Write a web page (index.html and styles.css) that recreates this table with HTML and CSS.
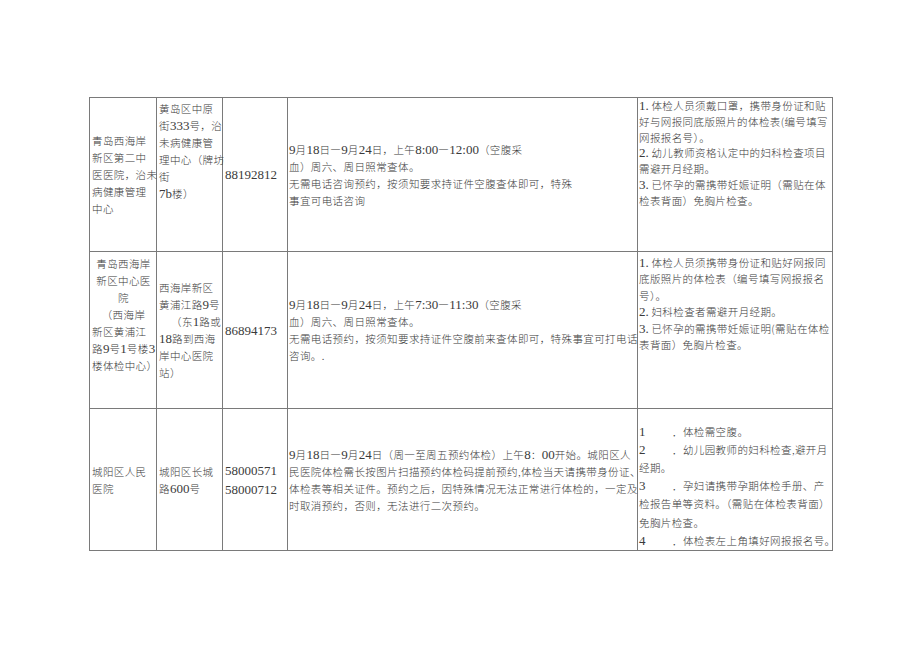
FILE: index.html
```html
<!DOCTYPE html>
<html lang="zh-CN">
<head>
<meta charset="utf-8">
<title>体检安排</title>
<link rel="stylesheet" href="styles.css">
</head>
<body>
<div class="page">
<table class="grid">
  <colgroup>
    <col class="c1"><col class="c2"><col class="c3"><col class="c4"><col class="c5">
  </colgroup>
  <tr class="r1">
    <td class="mid">青岛西海岸<br>新区第二中<br>医医院，治未<br>病健康管理<br>中心</td>
    <td class="top pt2">黄岛区中原<br>街<span class="d">333</span>号，治<br>未病健康管<br>理中心（牌坊<br>街<br><span class="d">7b</span>楼）</td>
    <td class="mid"><span class="d">88192812</span></td>
    <td class="mid wide"><span class="d">9</span>月<span class="d">18</span>日—<span class="d">9</span>月<span class="d">24</span>日，上午<span class="d">8:00</span>—<span class="d">12:00</span>（空腹采<br>血）周六、周日照常查体。<br>无需电话咨询预约，按须知要求持证件空腹查体即可，特殊<br>事宜可电话咨询</td>
    <td class="top notes n1"><span class="d">1.</span> 体检人员须戴口罩，携带身份证和贴<br>好与网报同底版照片的体检表(编号填写<br>网报报名号）。<br><span class="d">2.</span> 幼儿教师资格认定中的妇科检查项目<br>需避开月经期。<br><span class="d">3.</span> 已怀孕的需携带妊娠证明（需贴在体<br>检表背面）免胸片检查。</td>
  </tr>
  <tr class="r2">
    <td class="top pt4"><span class="ctr">青岛西海岸</span><span class="ctr">新区中心医</span><span class="ctr">院</span><span class="ctr">（西海岸</span>新区黄浦江<br>路<span class="d">9</span>号<span class="d">1</span>号楼<span class="d">3</span><br>楼体检中心）</td>
    <td class="mid">西海岸新区<br>黄浦江路<span class="d">9</span>号<br><span class="ind">（东<span class="d">1</span>路或</span><br><span class="d">18</span>路到西海<br>岸中心医院<br>站）</td>
    <td class="mid"><span class="d">86894173</span></td>
    <td class="mid wide"><span class="d">9</span>月<span class="d">18</span>日—<span class="d">9</span>月<span class="d">24</span>日，上午<span class="d">7:30</span>—<span class="d">11:30</span>（空腹采<br>血）周六、周日照常查体。<br>无需电话预约，按须知要求持证件空腹前来查体即可，特殊事宜可打电话<br>咨询。.</td>
    <td class="top notes n2 pt4"><span class="d">1.</span> 体检人员须携带身份证和贴好网报同<br>底版照片的体检表（编号填写网报报名<br>号）。<br><span class="d">2.</span> 妇科检查者需避开月经期。<br><span class="d">3.</span> 已怀孕的需携带妊娠证明(需贴在体检<br>表背面）免胸片检查。</td>
  </tr>
  <tr class="r3">
    <td class="mid">城阳区人民<br>医院</td>
    <td class="mid">城阳区长城<br>路<span class="d">600</span>号</td>
    <td class="mid tel"><span class="d">58000571</span><br><span class="d">58000712</span></td>
    <td class="mid wide"><span class="d">9</span>月<span class="d">18</span>日—<span class="d">9</span>月<span class="d">24</span>日（周一至周五预约体检）上午<span class="d">8</span>：<span class="d">00</span>开始。城阳区人<br>民医院体检需长按图片扫描预约体检码提前预约,体检当天请携带身份证、<br>体检表等相关证件。预约之后，因特殊情况无法正常进行体检的，一定及<br>时取消预约，否则，无法进行二次预约。</td>
    <td class="bot notes n3"><span class="num">1</span>．体检需空腹。<br><span class="num">2</span>．幼儿园教师的妇科检查,避开月<br>经期。<br><span class="num">3</span>．孕妇请携带孕期体检手册、产<br>检报告单等资料。（需贴在体检表背面）<br>免胸片检查。<br><span class="num">4</span>．体检表左上角填好网报报名号。</td>
  </tr>
</table>
</div>
</body>
</html>
```
FILE: styles.css
```css
html, body {
  margin: 0;
  padding: 0;
  background: #ffffff;
}

.page {
  padding: 97px 0 0 89px;
}

.grid {
  border-collapse: collapse;
  table-layout: fixed;
  width: 743px;
  font-family: "Noto Sans CJK SC", sans-serif;
  font-weight: 300;
  font-size: 10.5px;
  letter-spacing: 0.4px;
  color: #3a3a3a;
}

.c1 { width: 67px; }
.c2 { width: 66px; }
.c3 { width: 65px; }
.c4 { width: 350px; }
.c5 { width: 195px; }

.r1 { height: 154px; }
.r2 { height: 157px; }
.r3 { height: 142px; }

.grid td {
  border: 1px solid #7a7a7a;
  padding: 0 1px 0 2px;
  line-height: 17px;
  white-space: nowrap;
  overflow: visible;
}

.grid td.wide {
  padding-left: 1px;
}

.mid { vertical-align: middle; }
.top { vertical-align: top; }
.bot { vertical-align: bottom; }

.pt2 { padding-top: 2px !important; }
.pt4 { padding-top: 3px !important; }

.d {
  font-family: "Liberation Serif", serif;
  font-weight: 400;
  font-size: 13px;
  letter-spacing: 0;
  line-height: 0;
  color: #3a3a3a;
}

.ctr {
  display: block;
  text-align: center;
}

.ind {
  padding-left: 12px;
}

.tel {
  line-height: 19px !important;
}

.notes.n1 { line-height: 15.8px; padding-left: 1px; }
.notes.n2 { line-height: 16.4px; padding-left: 1px; }
.notes.n3 { line-height: 18.2px; padding-left: 1px; padding-bottom: 0; }

.num {
  display: inline-block;
  width: 33px;
  font-family: "Liberation Serif", serif;
  font-weight: 400;
  font-size: 13px;
  letter-spacing: 0;
  line-height: 0;
  color: #3a3a3a;
}
```
